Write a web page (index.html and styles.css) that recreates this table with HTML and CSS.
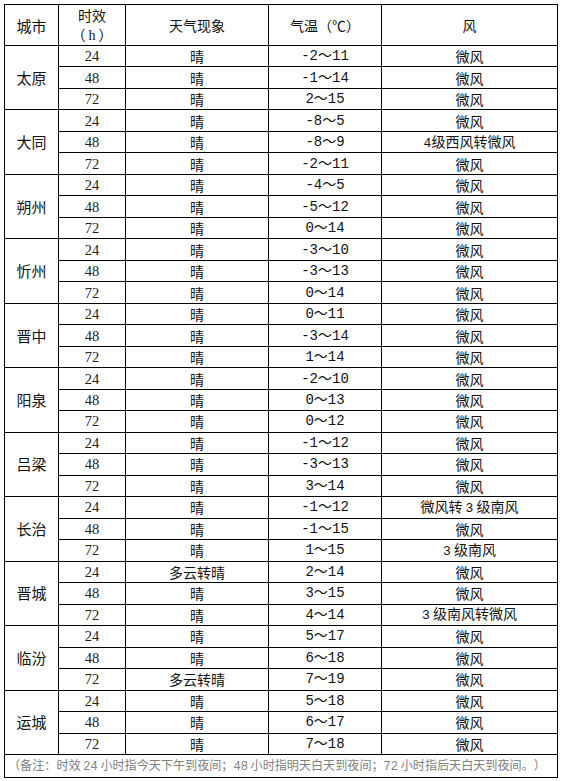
FILE: index.html
```html
<!DOCTYPE html>
<html lang="zh">
<head>
<meta charset="utf-8">
<link rel="stylesheet" href="styles.css">
</head>
<body>
<table class="fc">
<colgroup>
<col class="c1"><col class="c2"><col class="c3"><col class="c4"><col class="c5">
</colgroup>
<tr class="head">
<td class="city">城市</td>
<td class="hr">时效<br><span class="h">（<span class="lat">h</span>）</span></td>
<td>天气现象</td>
<td>气温（℃）</td>
<td>风</td>
</tr>
<tr><td class="city" rowspan="3">太原</td><td class="num">24</td><td>晴</td><td class="t">-2～11</td><td>微风</td></tr>
<tr><td class="num">48</td><td>晴</td><td class="t">-1～14</td><td>微风</td></tr>
<tr><td class="num">72</td><td>晴</td><td class="t">2～15</td><td>微风</td></tr>
<tr><td class="city" rowspan="3">大同</td><td class="num">24</td><td>晴</td><td class="t">-8～5</td><td>微风</td></tr>
<tr><td class="num">48</td><td>晴</td><td class="t">-8～9</td><td><span class="d">4</span>级西风转微风</td></tr>
<tr><td class="num">72</td><td>晴</td><td class="t">-2～11</td><td>微风</td></tr>
<tr><td class="city" rowspan="3">朔州</td><td class="num">24</td><td>晴</td><td class="t">-4～5</td><td>微风</td></tr>
<tr><td class="num">48</td><td>晴</td><td class="t">-5～12</td><td>微风</td></tr>
<tr><td class="num">72</td><td>晴</td><td class="t">0～14</td><td>微风</td></tr>
<tr><td class="city" rowspan="3">忻州</td><td class="num">24</td><td>晴</td><td class="t">-3～10</td><td>微风</td></tr>
<tr><td class="num">48</td><td>晴</td><td class="t">-3～13</td><td>微风</td></tr>
<tr><td class="num">72</td><td>晴</td><td class="t">0～14</td><td>微风</td></tr>
<tr><td class="city" rowspan="3">晋中</td><td class="num">24</td><td>晴</td><td class="t">0～11</td><td>微风</td></tr>
<tr><td class="num">48</td><td>晴</td><td class="t">-3～14</td><td>微风</td></tr>
<tr><td class="num">72</td><td>晴</td><td class="t">1～14</td><td>微风</td></tr>
<tr><td class="city" rowspan="3">阳泉</td><td class="num">24</td><td>晴</td><td class="t">-2～10</td><td>微风</td></tr>
<tr><td class="num">48</td><td>晴</td><td class="t">0～13</td><td>微风</td></tr>
<tr><td class="num">72</td><td>晴</td><td class="t">0～12</td><td>微风</td></tr>
<tr><td class="city" rowspan="3">吕梁</td><td class="num">24</td><td>晴</td><td class="t">-1～12</td><td>微风</td></tr>
<tr><td class="num">48</td><td>晴</td><td class="t">-3～13</td><td>微风</td></tr>
<tr><td class="num">72</td><td>晴</td><td class="t">3～14</td><td>微风</td></tr>
<tr><td class="city" rowspan="3">长治</td><td class="num">24</td><td>晴</td><td class="t">-1～12</td><td>微风转 <span class="d">3</span> 级南风</td></tr>
<tr><td class="num">48</td><td>晴</td><td class="t">-1～15</td><td>微风</td></tr>
<tr><td class="num">72</td><td>晴</td><td class="t">1～15</td><td><span class="d">3</span> 级南风</td></tr>
<tr><td class="city" rowspan="3">晋城</td><td class="num">24</td><td>多云转晴</td><td class="t">2～14</td><td>微风</td></tr>
<tr><td class="num">48</td><td>晴</td><td class="t">3～15</td><td>微风</td></tr>
<tr><td class="num">72</td><td>晴</td><td class="t">4～14</td><td><span class="d">3</span> 级南风转微风</td></tr>
<tr><td class="city" rowspan="3">临汾</td><td class="num">24</td><td>晴</td><td class="t">5～17</td><td>微风</td></tr>
<tr><td class="num">48</td><td>晴</td><td class="t">6～18</td><td>微风</td></tr>
<tr><td class="num">72</td><td>多云转晴</td><td class="t">7～19</td><td>微风</td></tr>
<tr><td class="city" rowspan="3">运城</td><td class="num">24</td><td>晴</td><td class="t">5～18</td><td>微风</td></tr>
<tr><td class="num">48</td><td>晴</td><td class="t">6～17</td><td>微风</td></tr>
<tr><td class="num">72</td><td>晴</td><td class="t">7～18</td><td>微风</td></tr>
<tr class="note"><td colspan="5">（备注：时效 <span class="d">24</span> 小时指今天下午到夜间；<span class="d">48</span> 小时指明天白天到夜间；<span class="d">72</span> 小时指后天白天到夜间。）</td></tr>
</table>
</body>
</html>
```
FILE: styles.css
```css
html, body {
  margin: 0;
  padding: 0;
  background: #fff;
}
body {
  padding: 4px 0 0 4px;
  font-family: "Noto Sans CJK SC", "Liberation Sans", sans-serif;
  color: #111;
  text-spacing-trim: space-all;
}
.fc {
  border-collapse: collapse;
  table-layout: fixed;
  width: 553px;
  font-size: 14px;
}
.c1 { width: 54px; }
.c2 { width: 67px; }
.c3 { width: 143px; }
.c4 { width: 113px; }
.c5 { width: 176px; }
.fc td {
  border: 1px solid #000;
  text-align: center;
  vertical-align: middle;
  padding: 0;
  line-height: 16px;
  white-space: nowrap;
  overflow: hidden;
}
.fc tr { height: 21.485px; }
.fc tr.head { height: 41px; }
.fc tr.head td { line-height: 19px; }
.city { font-size: 15px; }
.num {
  font-family: "Liberation Serif", "Noto Sans CJK SC", serif;
  font-size: 14.5px;
  color: #222;
}
.lat {
  font-family: "Liberation Serif", serif;
  padding: 0 3px;
}
.t {
  font-family: "Liberation Mono", "Noto Sans CJK SC", monospace;
  font-size: 14px;
}
.d { font-family: "Liberation Mono", monospace; font-size: 13px; }
.fc tr.note { height: 23px; }
.fc tr.note td {
  text-align: left;
  padding-left: 3px;
  color: #808080;
  font-size: 12.1px;
}
.fc tr.note td .d { font-size: 12px; }
```
